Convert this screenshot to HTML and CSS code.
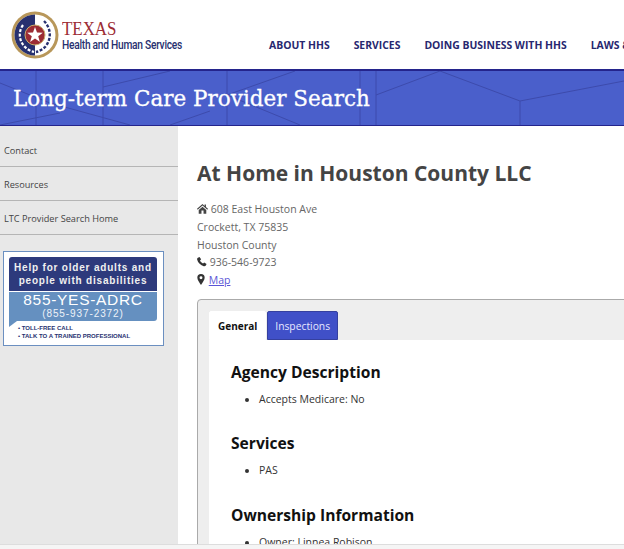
FILE: index.html
```html
<!DOCTYPE html>
<html lang="en">
<head>
    <meta charset="UTF-8">
    <meta name="viewport" content="width=device-width, initial-scale=1.0">
    <title>Long-term Care Provider Search</title>
    <link rel="stylesheet" href="styles.css">
</head>
<body>
    <header class="topbar">
        <div class="logo">
            <svg class="seal" width="48" height="48" viewBox="0 0 48 48">
                <circle cx="24" cy="24" r="23.500" fill="#b8975a"/>
                <circle cx="24" cy="24" r="20.500" fill="#fff"/>
                <path d="M24 3.500a20.500 20.500 0 0 0 0 41z" fill="#27306f"/>
                <g fill="none" stroke="#27306f" stroke-width="2.400" stroke-dasharray="3 1.600">
                    <path d="M33 10c7 7 8 18 1 26-2 2-5 4-9 5"/>
                </g>
                <g fill="none" stroke="#fff" stroke-width="2.200" stroke-dasharray="3 1.600">
                    <path d="M12 14c-5 7-4 16 2 22 2 2 5 4 9 5"/>
                </g>
                <circle cx="24" cy="24" r="10" fill="#9c2c34"/>
                <circle cx="24" cy="24" r="10" fill="none" stroke="#c9ad6b" stroke-width="1"/>
                <polygon points="24,16 26,21.600 31.800,21.700 27.200,25.200 28.900,31 24,27.600 19.100,31 20.800,25.200 16.200,21.700 22,21.600" fill="#fff"/>
            </svg>
            <div class="logo-text">
                <div class="logo-texas">TEXAS</div>
                <div class="logo-hhs">Health and Human Services</div>
            </div>
        </div>
        <nav class="topnav">
            <a href="#">ABOUT HHS</a>
            <a href="#">SERVICES</a>
            <a href="#">DOING BUSINESS WITH HHS</a>
            <a href="#">LAWS &amp; REGULATIONS</a>
        </nav>
    </header>

    <div class="banner">
        <svg class="banner-lines" width="624" height="54" viewBox="0 0 624 54">
            <path d="M36 0V54M103 0V54M227 0V54M360 0V54M376 0V54M0 12L50 32L130 54M103 16L170 0M227 24L295 0M376 24L440 0M0 54L60 42M170 54L210 40M227 24L300 54M440 0L520 30L624 10M520 30V54" fill="none" stroke="#3d4bac" stroke-width="1"/>
        </svg>
        <h1 class="banner-title">Long-term Care Provider Search</h1>
    </div>

    <div class="layout">
        <aside class="sidebar">
            <a class="side-link" href="#">Contact</a>
            <a class="side-link" href="#">Resources</a>
            <a class="side-link" href="#">LTC Provider Search Home</a>
            <div class="adrc">
                <div class="adrc-top">Help for older adults and people with disabilities</div>
                <div class="adrc-phone">
                    <div class="adrc-num">855-YES-ADRC</div>
                    <div class="adrc-alt">(855-937-2372)</div>
                </div>
                <div class="adrc-notes">
                    <div>&bull; TOLL-FREE CALL</div>
                    <div>&bull; TALK TO A TRAINED PROFESSIONAL</div>
                </div>
            </div>
        </aside>

        <main class="content">
            <h2 class="agency-name">At Home in Houston County LLC</h2>
            <div class="address">
                <div>
                    <svg class="icon" width="11" height="11" viewBox="0 0 16 16"><path d="M8 1.500L0 8.500l1 1.200L8 3.800l7 5.900 1-1.200-3-2.600V2h-2v2.400zM2.500 10v5.500h4V11h3v4.500h4V10L8 5.300z" fill="#444"/></svg>
                    608 East Houston Ave
                </div>
                <div>Crockett, TX 75835</div>
                <div>Houston County</div>
                <div>
                    <svg class="icon" width="10" height="11" viewBox="0 0 16 16"><path d="M4 .8L1.500 2C.5 2.500 0 3.800.3 5.300 1.500 10 6 14.500 10.800 15.700c1.500.3 2.700-.2 3.300-1.200l1.200-2.500-3.800-2.600-1.800 1.800C8 10.500 5.500 8 4.800 6.200l1.800-1.800z" fill="#333"/></svg>
                    936-546-9723
                </div>
                <div>
                    <svg class="icon icon-pin" width="8" height="11" viewBox="0 0 10 15"><path fill-rule="evenodd" d="M5 0a5 5 0 0 0-5 5c0 3 3 6.500 5 10 2-3.500 5-7 5-10a5 5 0 0 0-5-5zm0 3a2 2 0 1 1 0 4 2 2 0 0 1 0-4z" fill="#333"/></svg>
                    <a class="map-link" href="#">Map</a>
                </div>
            </div>

            <section class="panel">
                <div class="tabs">
                    <a class="tab tab-active" href="#">General</a>
                    <a class="tab" href="#">Inspections</a>
                </div>
                <div class="tab-body">
                    <h3>Agency Description</h3>
                    <ul><li>Accepts Medicare: No</li></ul>
                    <h3>Services</h3>
                    <ul><li>PAS</li></ul>
                    <h3>Ownership Information</h3>
                    <ul><li>Owner: Linnea Robison</li></ul>
                </div>
            </section>
        </main>
    </div>
    <div class="bottom-strip"></div>
</body>
</html>
```

FILE: styles.css
```css
html, body {
    height: 100%;
}
body {
    margin: 0;
    height: 549px;
    overflow: hidden;
    display: flex;
    flex-direction: column;
    font-family: "Open Sans", "Noto Sans", sans-serif;
    background-color: #fff;
}
.topbar {
    height: 69px;
    flex: none;
    display: flex;
    overflow: hidden;
    background: #fff;
}
.logo {
    flex: none;
    display: flex;
    width: 256px;
    padding: 11px 0 0 11px;
    box-sizing: border-box;
}
.seal {
    flex: none;
}
.logo-text {
    margin-left: 3px;
    padding-top: 8px;
}
.logo-texas {
    font-family: "Liberation Serif", serif;
    font-size: 19px;
    line-height: 19px;
    color: #9c2c34;
    transform: scaleX(0.89);
    transform-origin: left;
}
.logo-hhs {
    font-family: "Roboto", sans-serif;
    font-weight: 500;
    font-size: 12px;
    line-height: 14px;
    color: #27306f;
    white-space: nowrap;
    letter-spacing: -0.3px;
    transform: scaleX(0.85);
    transform-origin: left;
}
.topnav {
    display: flex;
    gap: 24px;
    padding: 38px 0 0 13px;
    white-space: nowrap;
}
.topnav a {
    font-size: 10.400px;
    font-weight: 700;
    color: #27276f;
    text-decoration: none;
}
.banner {
    position: relative;
    flex: none;
    height: 54px;
    border-top: 2px solid #24248c;
    border-bottom: 1px solid #24248c;
    background: #4a5fcb;
    overflow: hidden;
}
.banner-lines {
    position: absolute;
    left: 0;
    top: 0;
}
.banner-title {
    position: relative;
    margin: 0;
    padding: 1px 0 0 13px;
    font-family: "DejaVu Serif", serif;
    font-weight: 400;
    font-size: 21.500px;
    line-height: 54px;
    color: #fff;
    -webkit-text-stroke: 0.3px #fff;
}
.layout {
    flex: 1;
    display: flex;
    min-height: 0;
    overflow: hidden;
}
.sidebar {
    flex: none;
    width: 178px;
    background-color: #e8e8e8;
}
.side-link {
    display: block;
    height: 34px;
    box-sizing: border-box;
    padding: 10px 0 0 4px;
    line-height: 16px;
    border-bottom: 1px solid #b5b5b5;
    font-size: 9.200px;
    color: #444;
    text-decoration: none;
}
.side-link:first-child {
    height: 41px;
    padding-top: 17px;
}
.adrc {
    width: 161px;
    height: 95px;
    box-sizing: border-box;
    margin: 16px 0 0 3px;
    padding: 5px 6px 0 5px;
    border: 1px solid #6b8fc0;
    background: #fff;
}
.adrc-top {
    height: 34px;
    padding-top: 4px;
    box-sizing: border-box;
    border-radius: 3px 3px 0 0;
    background: #2d3a7c;
    color: #f0f0f0;
    font-family: "Liberation Sans", sans-serif;
    font-weight: 700;
    font-size: 10px;
    line-height: 13px;
    letter-spacing: 0.800px;
    text-align: center;
}
.adrc-phone {
    position: relative;
    height: 29px;
    margin-top: 1px;
    background: #6590c0;
    border-radius: 0 0 3px 0;
    color: #fff;
    text-align: center;
    font-family: "Liberation Sans", sans-serif;
}
.adrc-phone::after {
    content: "";
    position: absolute;
    left: 0;
    top: 100%;
    border-top: 6px solid #6590c0;
    border-right: 8px solid transparent;
}
.adrc-num {
    font-size: 15.500px;
    line-height: 16px;
    letter-spacing: 0.700px;
}
.adrc-alt {
    margin-top: 1px;
    font-size: 10px;
    font-weight: 400;
    line-height: 10px;
    letter-spacing: 0.900px;
    color: #eef2f8;
}
.adrc-notes {
    margin-top: 3px;
    padding-left: 9px;
    font-family: "Liberation Sans", sans-serif;
    font-weight: 700;
    font-size: 6px;
    line-height: 8px;
    color: #27306f;
}
.content {
    flex: 1;
    min-width: 0;
    padding: 33px 0 0 19px;
    background: #fff;
}
.agency-name {
    margin: 0 0 14px;
    font-size: 21px;
    line-height: 28px;
    font-weight: 700;
    color: #444;
    white-space: nowrap;
}
.address {
    font-size: 10.500px;
    line-height: 17.800px;
    color: #666;
}
.icon {
    vertical-align: -1px;
}
.icon-pin {
    margin-right: 1px;
}
.map-link {
    color: #5a55d6;
}
.panel {
    width: 500px;
    height: 300px;
    margin-top: 9px;
    padding: 11px 0 0 11px;
    box-sizing: border-box;
    border: 1px solid #aaa;
    border-radius: 4px 0 0 0;
    background: #eee;
}
.tabs {
    display: flex;
    gap: 1px;
    height: 29px;
}
.tab {
    box-sizing: border-box;
    padding: 0 7px;
    line-height: 29px;
    font-size: 10.300px;
    color: #e8e8ff;
    background: #4050c8;
    border: 1px solid #35409f;
    border-radius: 2px 2px 0 0;
    text-decoration: none;
}
.tab-active {
    padding: 0 8px;
    font-size: 10px;
    font-weight: 700;
    color: #111;
    background: #fff;
    border-color: #fff;
}
.tab-body {
    height: 300px;
    padding: 19px 0 0 22px;
    background: #fff;
}
.tab-body h3 {
    margin: 0;
    font-size: 15.600px;
    line-height: 26px;
    font-weight: 700;
    color: #111;
}
.tab-body ul {
    margin: 3px 0 20.500px;
    padding-left: 28px;
    font-size: 10.500px;
    line-height: 22px;
    color: #333;
}
.bottom-strip {
    flex: none;
    height: 5px;
    box-sizing: border-box;
    border-top: 1px solid #ddd;
    background: #f5f5f5;
}
```
